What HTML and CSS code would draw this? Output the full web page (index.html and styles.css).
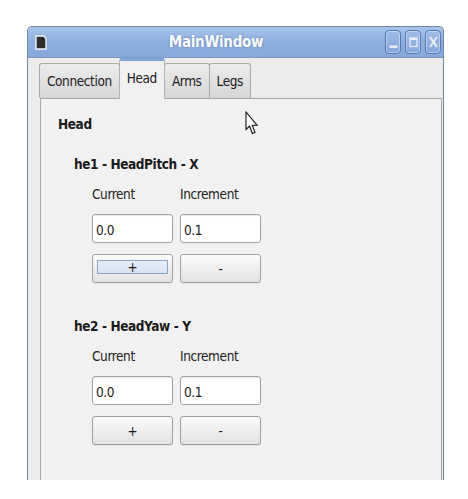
FILE: index.html
```html
<!DOCTYPE html>
<html lang="en">
<head>
<meta charset="utf-8">
<title>MainWindow</title>
<link rel="stylesheet" href="styles.css">
</head>
<body>
<div class="window">
  <div class="titlebar">
    <svg class="app-icon" width="12" height="15" viewBox="0 0 12 15">
      <path d="M1 1 H8.5 L11 3.5 V14 H1 Z" fill="#2e2e2e" stroke="#f4f4f4" stroke-width="1.4"/>
    </svg>
    <div class="title">MainWindow</div>
    <div class="wm-buttons">
      <span class="wm-btn"><svg width="11" height="16" viewBox="0 0 11 16"><rect x="1.5" y="11.5" width="8" height="2.4" fill="#e9eef6"/></svg></span>
      <span class="wm-btn"><svg width="11" height="16" viewBox="0 0 11 16"><rect x="2" y="4" width="7" height="8.5" fill="none" stroke="#e9eef6" stroke-width="1.3"/><rect x="2" y="4" width="7" height="2" fill="#e9eef6"/></svg></span>
      <span class="wm-btn"><svg width="11" height="16" viewBox="0 0 11 16"><path d="M2 3 L9 13 M9 3 L2 13" stroke="#e9eef6" stroke-width="2"/></svg></span>
    </div>
  </div>
  <div class="client">
    <div class="tabs">
      <div class="tab">Connection</div>
      <div class="tab active">Head</div>
      <div class="tab">Arms</div>
      <div class="tab">Legs</div>
    </div>
    <div class="pane">
      <div class="group-title">Head</div>
      <div class="joint">
        <div class="joint-title">he1 - HeadPitch - X</div>
        <div class="joint-grid">
          <div class="lbl">Current</div>
          <div class="lbl">Increment</div>
          <div class="field">0.0</div>
          <div class="field">0.1</div>
          <div class="btn focused"><span class="focus-ring">+</span></div>
          <div class="btn">-</div>
        </div>
      </div>
      <div class="joint joint-next">
        <div class="joint-title">he2 - HeadYaw - Y</div>
        <div class="joint-grid">
          <div class="lbl">Current</div>
          <div class="lbl">Increment</div>
          <div class="field">0.0</div>
          <div class="field">0.1</div>
          <div class="btn">+</div>
          <div class="btn">-</div>
        </div>
      </div>
    </div>
  </div>
</div>
<svg class="cursor" width="13" height="24" viewBox="0 0 13 24">
  <path d="M1 1 V18.5 L4.6 15 L7.4 22.5 L10 21.4 L7.3 14.2 H12 Z" fill="#fff" stroke="#111" stroke-width="1.1" stroke-linejoin="miter"/>
</svg>
</body>
</html>
```

FILE: styles.css
```css
html, body {
  margin: 0;
  padding: 0;
  background: #ffffff;
}
body {
  font-family: "DejaVu Sans Condensed", "DejaVu Sans", sans-serif;
  font-stretch: condensed;
  font-size: 13.5px;
  letter-spacing: -0.4px;
  line-height: 16px;
  color: #1a1a1a;
  position: relative;
  width: 468px;
  height: 499px;
  overflow: hidden;
}
.window {
  margin: 26px 0 0 27px;
  width: 415px;
  height: 453px;
  border: 1px solid #6f86a8;
  border-bottom: none;
  border-radius: 5px 5px 0 0;
  background: #ebebeb;
  display: flex;
  flex-direction: column;
  overflow: hidden;
}
.titlebar {
  height: 30px;
  flex: none;
  display: grid;
  grid-template-columns: auto 1fr auto;
  align-items: center;
  padding: 0 2px 0 7px;
  background: linear-gradient(#a9c4e9, #8fb0e0 45%, #86a8db);
  border-bottom: 1px solid #7d97bd;
}
.app-icon {
  display: block;
  margin-top: 1px;
}
.title {
  text-align: center;
  color: #ffffff;
  font-weight: bold;
  font-size: 15px;
  letter-spacing: -0.3px;
  text-shadow: 0 0 2px rgba(60, 90, 140, 0.55);
}
.wm-buttons {
  display: flex;
  gap: 4px;
}
.wm-btn {
  width: 14px;
  height: 22px;
  border: 1px solid #5577ab;
  border-radius: 4px;
  background: linear-gradient(#9ebbe5, #86a8dc);
  box-shadow: inset 0 0 0 1px rgba(220, 232, 250, 0.55);
  display: flex;
  align-items: center;
  justify-content: center;
}
.wm-btn svg {
  display: block;
}
.client {
  flex: 1;
  display: flex;
  flex-direction: column;
  padding: 0 1px 0 12px;
  background: #ececec;
}
.tabs {
  height: 40px;
  flex: none;
  display: flex;
  align-items: flex-end;
  margin-left: -1px;
  position: relative;
  z-index: 1;
}
.tab {
  height: 34px;
  padding: 0 7px;
  display: flex;
  align-items: center;
  border: 1px solid #a9a9a9;
  border-bottom: none;
  border-radius: 3px 3px 0 0;
  background: linear-gradient(#ececec, #d6d6d6);
  color: #202020;
  margin-right: -1px;
}
.tab.active {
  box-sizing: border-box;
  height: 41px;
  padding: 0 7px 4px;
  margin-bottom: -1px;
  border-color: #b3b3b3;
  border-top: 3px solid #7fa5da;
  background: #f1f1f1;
  position: relative;
  z-index: 2;
}
.pane {
  flex: 1;
  border: 1px solid #a6a6a6;
  border-bottom: none;
  background: #f1f1f1;
  padding: 17px 0 0 17px;
}
.group-title {
  font-weight: bold;
}
.joint {
  margin-top: 24px;
  padding-left: 16px;
}
.joint-next {
  margin-top: 34px;
}
.joint-title {
  font-weight: bold;
}
.joint-grid {
  margin-top: 14px;
  padding-left: 18px;
  display: grid;
  grid-template-columns: 81px 81px;
  grid-template-rows: 16px 29px 29px;
  column-gap: 7px;
  row-gap: 12px;
}
.joint-grid .btn {
  margin-top: -1px;
}
.lbl {
  color: #222;
}
.field {
  box-sizing: border-box;
  height: 29px;
  border: 1px solid #a2a2a2;
  border-radius: 3px;
  background: #ffffff;
  box-shadow: inset 0 1px 1px rgba(0, 0, 0, 0.08);
  padding: 2px 3px 0;
  display: flex;
  align-items: center;
  color: #1a1a1a;
}
.btn {
  box-sizing: border-box;
  height: 29px;
  border: 1px solid #a0a0a0;
  border-radius: 3px;
  background: linear-gradient(#fbfbfb, #ececec 60%, #e2e2e2);
  box-shadow: 0 1px 0 rgba(0, 0, 0, 0.06);
  display: flex;
  align-items: center;
  justify-content: center;
  color: #1a1a1a;
}
.btn.focused {
  padding: 5px 4px 8px;
  align-items: stretch;
}
.focus-ring {
  flex: 1;
  border: 1px solid #8da4c2;
  background: linear-gradient(#e6eef8, #d7e3f2);
  display: flex;
  align-items: center;
  justify-content: center;
  line-height: 12px;
}
.cursor {
  position: absolute;
  left: 245px;
  top: 111px;
}
```
